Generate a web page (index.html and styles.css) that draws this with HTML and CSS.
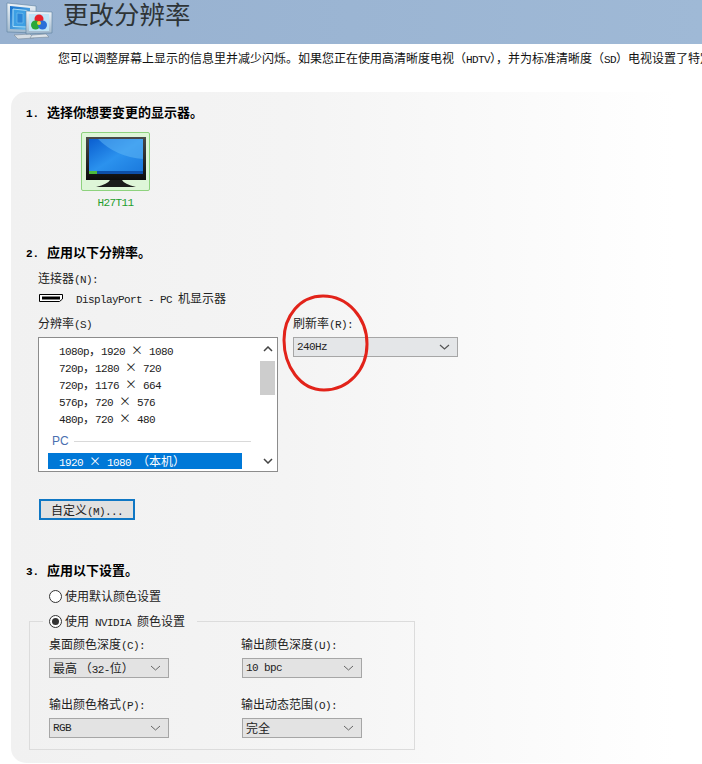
FILE: index.html
```html
<!DOCTYPE html>
<html lang="zh">
<head>
<meta charset="utf-8">
<title>更改分辨率</title>
<link rel="stylesheet" href="styles.css">
</head>
<body>
<header class="banner">
  <svg class="banner-icon" width="48" height="40" viewBox="0 0 48 40">
    <defs>
      <linearGradient id="bscreen" x1="0" y1="0" x2="1" y2="1"><stop offset="0" stop-color="#1670cc"/><stop offset="1" stop-color="#6cc0ec"/></linearGradient>
      <linearGradient id="frame" x1="0" y1="0" x2="0" y2="1"><stop offset="0" stop-color="#eef4f9"/><stop offset="1" stop-color="#9fb7cc"/></linearGradient>
    </defs>
    <path d="M1 1 L30 4 L30 31 L1 30 Z" fill="url(#frame)" stroke="#5d7f9e" stroke-width=".6"/>
    <path d="M4 4 L24 6 L24 28 L4 27 Z" fill="url(#bscreen)"/>
    <path d="M7 7 L21 8.500 L21 25 L7 24.500 Z" fill="#3d9fe4" stroke="#a6dcf8"/>
    <path d="M11 11 L17 11.500 L17 21 L11 21 Z" fill="#2c86d8" stroke="#7cc8f0" stroke-width=".6"/>
    <path d="M8 33 L24 32 L28 36 L12 37 Z" fill="#d6dde4" stroke="#7b8c9b" stroke-width=".6"/>
    <path d="M20 9 L46 10 L46 31 L20 32 Z" fill="url(#frame)" stroke="#5d7f9e" stroke-width=".6"/>
    <rect x="23" y="12" width="20" height="17" fill="#bfe3f5"/>
    <circle cx="33" cy="17" r="4.500" fill="#e8222a"/>
    <circle cx="29.500" cy="23" r="4.500" fill="#2aa83a"/>
    <circle cx="36.500" cy="23" r="4.500" fill="#2a6fd8"/>
    <circle cx="33" cy="21" r="2" fill="#f4d23a"/>
    <path d="M26 33 L40 32 L43 35 L24 36 Z" fill="#dfe6ec" stroke="#7b8c9b" stroke-width=".6"/>
  </svg>
  <h1 class="banner-title">更改分辨率</h1>
</header>
<p class="intro">您可以调整屏幕上显示的信息里并减少闪烁。如果您正在使用高清晰度电视（<span class="lat">HDTV</span>），并为标准清晰度（<span class="lat">SD</span>）电视设置了特定</p>

<main class="panel">
  <h2 class="step"><span class="step-no">1.</span>选择你想要变更的显示器。</h2>
  <div class="display-pick">
    <div class="tile">
      <svg width="60" height="53" viewBox="0 0 60 53">
        <defs>
          <linearGradient id="scr" x1="0" y1="0" x2="1" y2="1"><stop offset="0" stop-color="#0a5ed0"/><stop offset=".5" stop-color="#2b92ee"/><stop offset="1" stop-color="#1a78dc"/></linearGradient>
          <linearGradient id="bez" x1="0" y1="0" x2="0" y2="1"><stop offset="0" stop-color="#4a4a4a"/><stop offset="1" stop-color="#0c0c0c"/></linearGradient>
        </defs>
        <rect x="0" y="2" width="60" height="43" fill="url(#bez)"/>
        <rect x="3" y="4" width="54" height="35" fill="url(#scr)"/>
        <path d="M12 4 Q30 22 57 24 L57 4 Z" fill="#5db4f4" opacity=".55"/>
        <rect x="3" y="36" width="54" height="3" fill="#0d4fa8"/>
        <rect x="3" y="36" width="8" height="3" fill="#4dbb3c"/>
        <path d="M24 45 L36 45 Q38 49 50 52 L10 52 Q22 49 24 45 Z" fill="#1c1c1c"/>
      </svg>
    </div>
    <div class="tile-name"><span class="lat">H27T11</span></div>
  </div>

  <h2 class="step step-gap"><span class="step-no">2.</span>应用以下分辨率。</h2>
  <div class="indent">
    <div class="label label-conn">连接器<span class="lat">(N):</span></div>
    <div class="connector">
      <svg class="connector-icon" width="24" height="8" viewBox="0 0 24 8"><path d="M.5 .5 H23.500 V5 L20.500 7.500 H.5 Z" fill="#fff" stroke="#000"/><rect x="3" y="2.500" width="18" height="3" fill="#000"/></svg>
      <span class="connector-name"><span class="lat">DisplayPort - PC </span>机显示器</span>
    </div>
    <div class="res-row">
      <div class="res-col">
        <div class="label">分辨率<span class="lat">(S)</span></div>
        <div class="listbox">
          <div class="list-items">
            <div class="item"><span class="lat">1080p</span>，<span class="lat">1920 </span>×<span class="lat"> 1080</span></div>
            <div class="item"><span class="lat">720p</span>，<span class="lat">1280 </span>×<span class="lat"> 720</span></div>
            <div class="item"><span class="lat">720p</span>，<span class="lat">1176 </span>×<span class="lat"> 664</span></div>
            <div class="item"><span class="lat">576p</span>，<span class="lat">720 </span>×<span class="lat"> 576</span></div>
            <div class="item"><span class="lat">480p</span>，<span class="lat">720 </span>×<span class="lat"> 480</span></div>
            <div class="group"><span class="group-name">PC</span><span class="group-line"></span></div>
            <div class="item item-selected"><span class="lat">1920 </span>×<span class="lat"> 1080 </span>（本机）</div>
          </div>
          <div class="scrollbar">
            <svg class="arrow" width="10" height="6" viewBox="0 0 10 6"><path d="M1 5 L5 1 L9 5" fill="none" stroke="#444" stroke-width="1.500"/></svg>
            <div class="thumb"></div>
            <svg class="arrow arrow-down" width="10" height="6" viewBox="0 0 10 6"><path d="M1 1 L5 5 L9 1" fill="none" stroke="#444" stroke-width="1.500"/></svg>
          </div>
        </div>
      </div>
      <div class="rate-col">
        <div class="label">刷新率<span class="lat">(R):</span></div>
        <div class="select select-wide"><span class="lat">240Hz</span><svg class="chev" width="11" height="6" viewBox="0 0 11 6"><path d="M1 1 L5.500 5 L10 1" fill="none" stroke="#555" stroke-width="1.200"/></svg></div>
      </div>
    </div>
    <button class="custom-btn" type="button">自定义<span class="lat">(M)...</span></button>
  </div>

  <h2 class="step step-gap3"><span class="step-no">3.</span>应用以下设置。</h2>
  <div class="radio-row"><span class="radio"></span><span>使用默认颜色设置</span></div>
  <fieldset class="color-box">
    <legend class="radio-row legend"><span class="radio radio-on"></span><span>使用<span class="lat"> NVIDIA </span>颜色设置</span></legend>
    <div class="color-grid">
      <div>
        <div class="label">桌面颜色深度<span class="lat">(C):</span></div>
        <div class="select"><span>最高 （<span class="lat">32-</span>位）</span><svg class="chev" width="11" height="6" viewBox="0 0 11 6"><path d="M1 1 L5.500 5 L10 1" fill="none" stroke="#666"/></svg></div>
      </div>
      <div>
        <div class="label">输出颜色深度<span class="lat">(U):</span></div>
        <div class="select"><span class="lat">10 bpc</span><svg class="chev" width="11" height="6" viewBox="0 0 11 6"><path d="M1 1 L5.500 5 L10 1" fill="none" stroke="#666"/></svg></div>
      </div>
      <div>
        <div class="label">输出颜色格式<span class="lat">(P):</span></div>
        <div class="select"><span class="lat">RGB</span><svg class="chev" width="11" height="6" viewBox="0 0 11 6"><path d="M1 1 L5.500 5 L10 1" fill="none" stroke="#666"/></svg></div>
      </div>
      <div>
        <div class="label">输出动态范围<span class="lat">(O):</span></div>
        <div class="select"><span>完全</span><svg class="chev" width="11" height="6" viewBox="0 0 11 6"><path d="M1 1 L5.500 5 L10 1" fill="none" stroke="#666"/></svg></div>
      </div>
    </div>
  </fieldset>
</main>

<svg class="red-circle" width="90" height="100" viewBox="0 0 90 100"><path d="M43 2 C68 2 87 24 87 50 C87 76 68 96 44 96 C20 96 4 72 4 46 C4 22 20 2 43 2 Z" fill="none" stroke="#e2231a" stroke-width="3"/></svg>
</body>
</html>
```

FILE: styles.css
```css
html, body {
  margin: 0;
  padding: 0;
  background: #fff;
}
body {
  position: relative;
  width: 702px;
  height: 764px;
  overflow: hidden;
  font-family: "Noto Sans CJK SC", "Liberation Mono", monospace;
  font-size: 12px;
  line-height: 16px;
  color: #222;
}
.lat {
  font-family: "Liberation Mono", monospace;
  font-size: 11px;
  letter-spacing: -0.6px;
  line-height: 1;
  white-space: pre;
}
.banner {
  display: flex;
  align-items: flex-start;
  height: 44px;
  background: linear-gradient(90deg, #97b1d0, #9fb9d6);
}
.banner-icon {
  flex: none;
  margin: 2px 0 0 6px;
}
.banner-title {
  margin: 0 0 0 9px;
  font-size: 25.500px;
  font-weight: 400;
  line-height: 26px;
  color: #2e3436;
}
.intro {
  margin: 6px 0 0;
  padding-left: 58px;
  white-space: nowrap;
  color: #111;
}
.panel {
  box-sizing: border-box;
  height: 671px;
  margin: 26px 0 0 11px;
  padding: 13px 0 13px 15px;
  border-radius: 15px 0 0 15px;
  background: linear-gradient(90deg, #f1f1f1 0, #f4f4f4 40%, #fff 96%);
}
.step {
  box-sizing: border-box;
  height: 16px;
  margin: 0;
  font-size: 13px;
  font-weight: 700;
  line-height: 14px;
  color: #000;
}
.step-no {
  display: inline-block;
  width: 21px;
  font-family: "Liberation Mono", monospace;
  font-size: 11px;
  line-height: 1;
}
.step-gap { margin-top: 36px; }
.step-gap3 { margin-top: 43px; }
.display-pick {
  width: 69px;
  margin: 11px 0 0 55px;
}
.tile {
  box-sizing: border-box;
  display: flex;
  align-items: center;
  justify-content: center;
  height: 59px;
  border: 1px solid #8ed27e;
  border-radius: 2px;
  background: #def6d8;
}
.tile-name {
  margin-top: 2px;
  text-align: center;
  color: #1f9e2e;
}
.indent { margin-left: 12px; }
.label { color: #222; }
.label-conn { margin-top: 9px; }
.connector {
  display: flex;
  align-items: center;
  gap: 13px;
  margin: 4px 0 0 1px;
  height: 16px;
}
.connector-icon {
  flex: none;
  margin-top: -1px;
}
.res-row {
  display: flex;
  gap: 15px;
  margin-top: 9px;
}
.listbox {
  box-sizing: border-box;
  display: flex;
  width: 240px;
  height: 135px;
  margin-top: 6px;
  border: 1px solid #8c8c8c;
  background: #fff;
  overflow: hidden;
}
.list-items {
  flex: 1;
  min-width: 0;
  padding: 3px 0 0 9px;
}
.item {
  height: 17px;
  line-height: 17px;
  padding-left: 11px;
  white-space: nowrap;
  color: #222;
}
.group {
  display: flex;
  align-items: center;
  height: 20px;
  margin: 5px 0 0 4px;
  color: #4a6fb0;
  font-family: "Liberation Sans", sans-serif;
}
.group-name { margin-right: 5px; }
.group-line {
  width: 177px;
  height: 1px;
  background: #d9d9d9;
}
.item-selected {
  width: 183px;
  height: 16px;
  line-height: 16px;
  margin-top: 2px;
  background: #0078d7;
  color: #fff;
}
.scrollbar {
  display: flex;
  flex-direction: column;
  align-items: center;
  flex: none;
  width: 17px;
  margin-right: 1px;
}
.arrow { margin-top: 8px; }
.thumb {
  width: 15px;
  height: 34px;
  margin-top: 9px;
  background: #cdcdcd;
}
.arrow-down { margin-top: 63px; }
.rate-col { width: 165px; }
.select {
  box-sizing: border-box;
  display: flex;
  align-items: center;
  justify-content: space-between;
  width: 120px;
  height: 20px;
  margin-top: 6px;
  padding: 0 7px 0 3px;
  border: 1px solid #a6a6a6;
  background: #e3e3e3;
  color: #222;
}
.select-wide {
  width: 165px;
  background: #e4e6e8;
}
.chev { flex: none; }
.custom-btn {
  display: block;
  box-sizing: border-box;
  width: 96px;
  height: 21px;
  margin: 27px 0 0 1px;
  padding: 0;
  border: 2px solid #0f77c4;
  background: #e1e1e1;
  font: inherit;
  color: #222;
  text-align: center;
}
.radio-row {
  display: flex;
  align-items: center;
  gap: 3px;
  height: 16px;
  margin: 9px 0 0 23px;
  white-space: pre;
}
.radio {
  box-sizing: border-box;
  position: relative;
  flex: none;
  width: 13px;
  height: 13px;
  border: 1px solid #333;
  border-radius: 50%;
  background: #fff;
}
.radio-on::after {
  content: "";
  position: absolute;
  left: 2px;
  top: 2px;
  width: 7px;
  height: 7px;
  border-radius: 50%;
  background: #333;
}
.color-box {
  box-sizing: border-box;
  width: 386px;
  min-width: 0;
  margin: 9px 0 0 3px;
  padding: 0 0 11px 19px;
  border: 1px solid #dcdcdc;
}
.legend {
  margin: 0 0 0 -6px;
  padding: 0 12px 0 6px;
}
.color-grid {
  display: grid;
  grid-template-columns: 192px 120px;
  row-gap: 18px;
  margin-top: 7px;
}
.color-grid > div:nth-child(even) .select {
  margin-left: 1px;
}
.red-circle {
  position: absolute;
  left: 280px;
  top: 294px;
}
```
